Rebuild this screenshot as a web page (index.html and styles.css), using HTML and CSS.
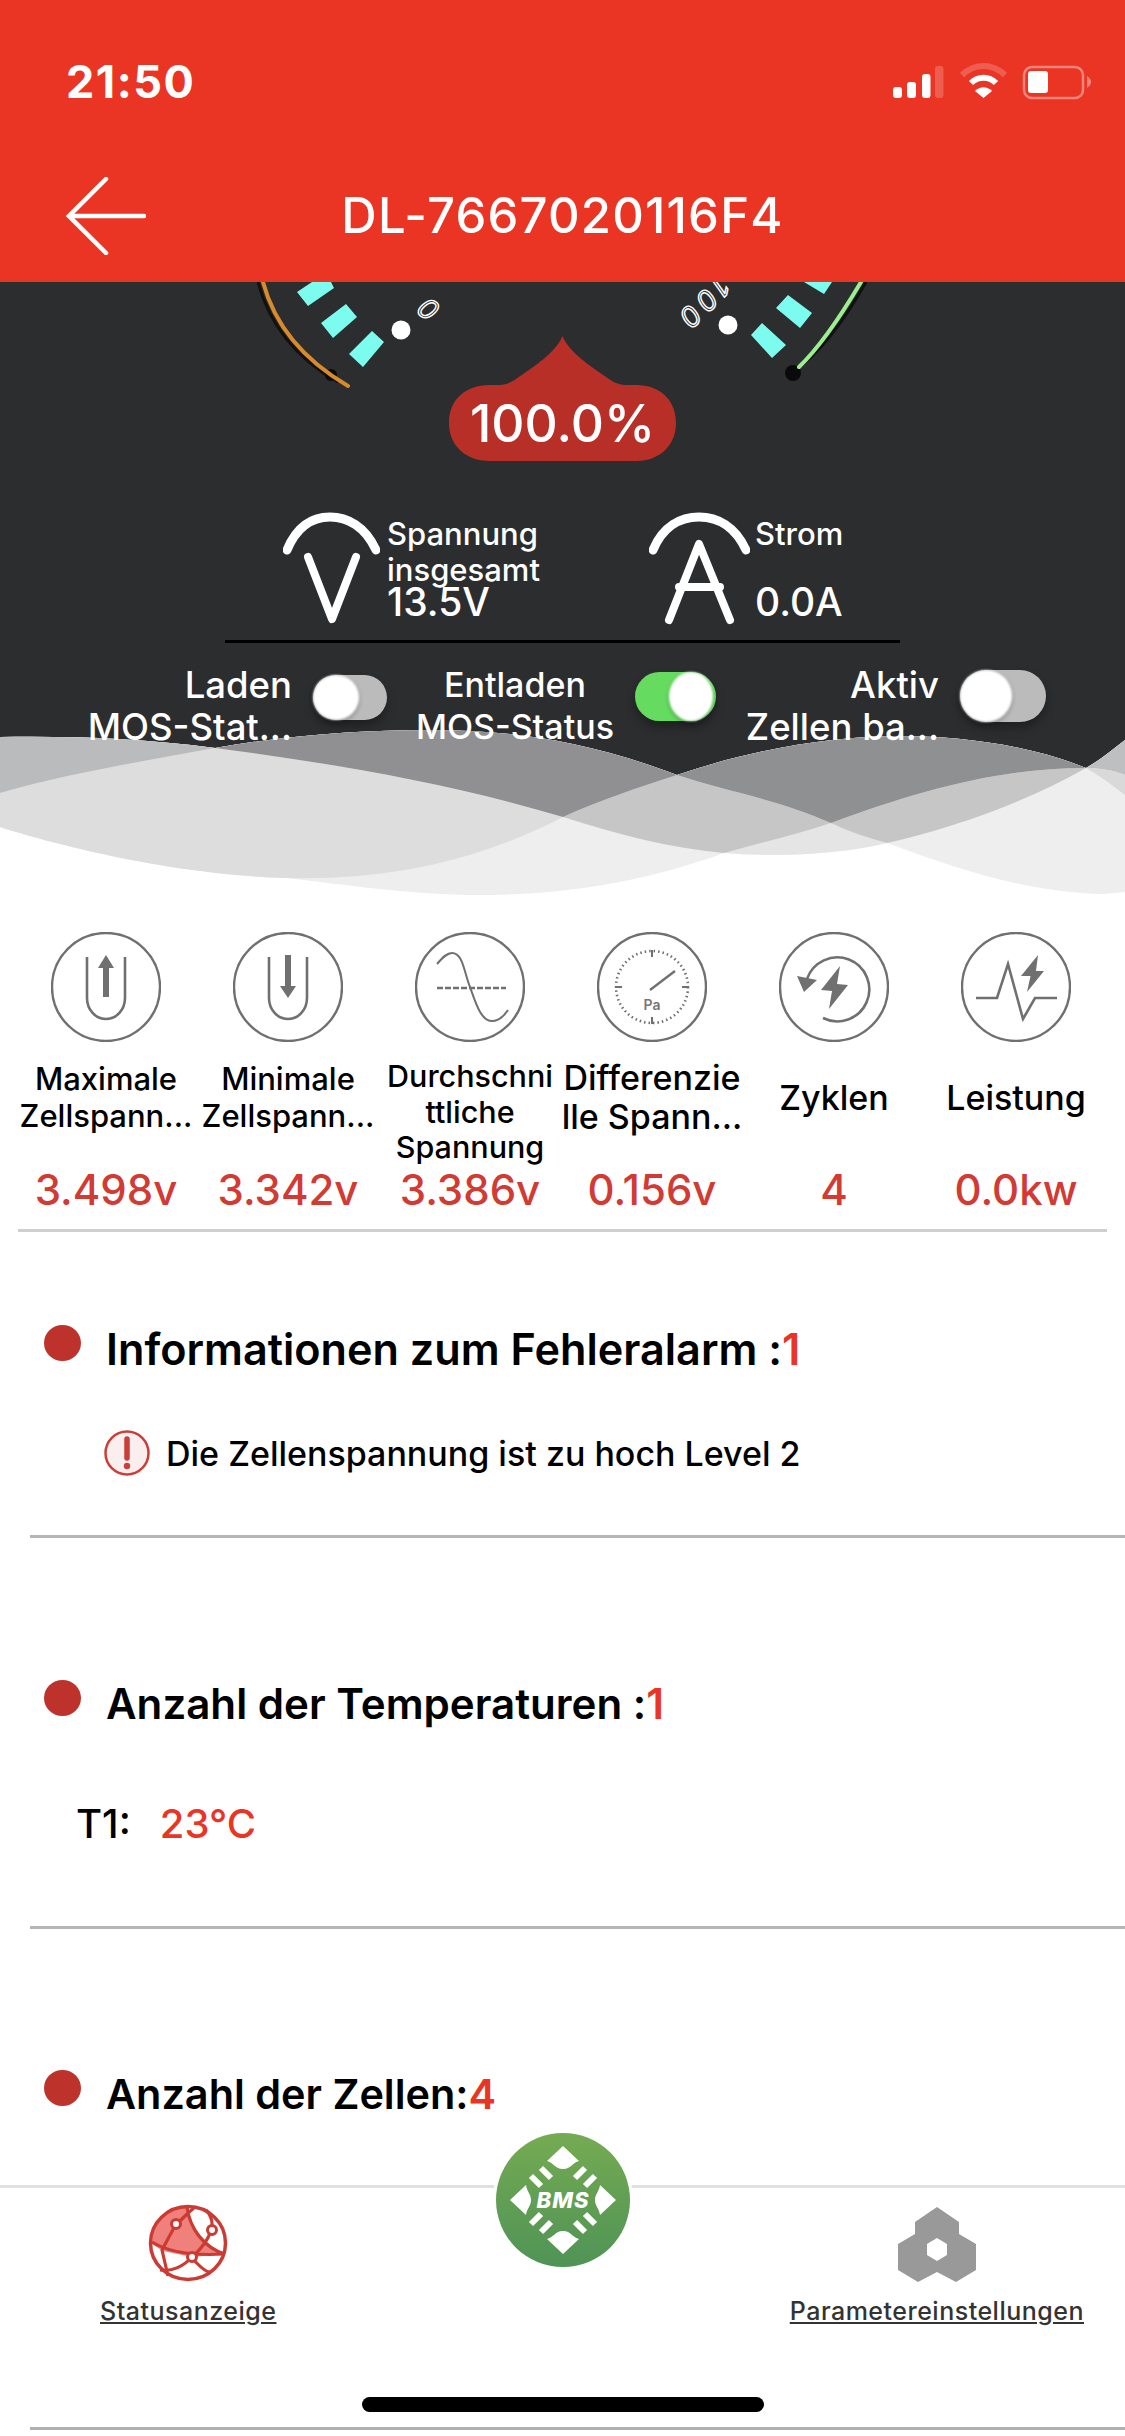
FILE: index.html
```html
<!DOCTYPE html>
<html lang="de">
<head>
<meta charset="utf-8">
<title>DL-7667020116F4</title>
<link rel="stylesheet" href="styles.css">
</head>
<body>
<div class="screen">
  <header class="app-header">
    <div class="statusbar">
      <span class="time">21:50</span>
      <svg class="status-icons" viewBox="880 60 220 45" width="220" height="45">
        <rect x="893" y="87" width="9" height="11" rx="3" fill="#fff"/>
        <rect x="907" y="82" width="9" height="16" rx="3" fill="#fff"/>
        <rect x="922" y="74" width="8.500" height="24" rx="3" fill="#fff"/>
        <rect x="935" y="66" width="8.500" height="32" rx="3" fill="#fff" opacity=".2"/>
        <path d="M962 75 C975 63 992 63 1005 75" fill="none" stroke="#fff" stroke-opacity=".2" stroke-width="6"/>
        <path d="M971 83 C978 76 989 76 996 83" fill="none" stroke="#fff" stroke-width="6"/>
        <path d="M975 91 C980 86 987 86 992 91 L983.500 98Z" fill="#fff"/>
        <rect x="1024" y="67" width="59" height="31" rx="8" fill="none" stroke="#fff" stroke-opacity=".4" stroke-width="2.500"/>
        <rect x="1028" y="71" width="20" height="22" rx="3" fill="#fff"/>
        <path d="M1087 76 C1090 78 1091 80 1091 82 C1091 84 1090 86 1087 88Z" fill="#fff" opacity=".4"/>
      </svg>
    </div>
    <div class="titlebar">
      <svg class="back" viewBox="0 0 80 78" width="80" height="78">
        <path d="M40 2 L3 39 L40 76 M3 39 H78" fill="none" stroke="#fff" stroke-width="4.500" stroke-linecap="round"/>
      </svg>
      <h1 class="device-name">DL-7667020116F4</h1>
      <span></span>
    </div>
  </header>

  <section class="panel">
    <svg class="waves" viewBox="0 720 1125 190" width="1125" height="190">
      <path fill="#fff" d="M0 737 C70 736 140 738 215 748 C290 735 360 730 431 730 C500 730 580 738 677 775 C750 750 830 736 900 736 C960 736 1030 745 1086 768 C1100 760 1112 750 1125 740 L1125 910 L0 910Z"/>
      <path fill="#eee" d="M0 737 C70 736 140 738 215 748 C290 735 360 730 431 730 C500 730 580 738 677 775 C750 750 830 736 900 736 C960 736 1030 745 1086 768 C1100 760 1112 750 1125 740 L1125 892 L1104 894 C1030 893 960 870 887 843 C835 855 780 857 724 853 C650 880 570 895 480 895 C410 895 340 884 287 878 C170 875 50 843 0 827Z"/>
      <path fill="#ddd" d="M0 793 C70 773 140 762 215 748 C330 763 450 783 563 817 C470 865 380 880 287 878 C170 875 50 843 0 827Z"/>
      <path fill="#e5e5e5" d="M724 853 C762 842 796 835 831 823 C850 832 868 838 887 843 C835 855 780 857 724 853Z"/>
      <path fill="#c6c6c6" d="M563 817 C600 800 640 787 677 775 C725 791 780 800 831 823 C796 835 762 842 724 853 C670 848 620 835 563 817Z"/>
      <path fill="#c6c6c6" d="M831 823 C920 790 1000 768 1086 768 C1030 800 960 826 887 843 C868 838 850 832 831 823Z"/>
      <path fill="#909092" d="M215 748 C290 735 360 730 431 730 C500 730 580 738 677 775 C640 787 600 800 563 817 C450 783 330 763 215 748Z"/>
      <path fill="#8f9092" d="M677 775 C750 750 830 736 900 736 C960 736 1030 745 1086 768 C1000 768 920 790 831 823 C780 800 725 791 677 775Z"/>
      <path fill="#babbbc" d="M0 737 C70 736 140 738 215 748 C140 762 70 773 0 793Z"/>
      <path fill="#bebfc0" d="M1086 768 C1100 768 1112 770 1125 775 L1125 740 C1112 750 1100 760 1086 768Z"/>
      <path fill="#d9d9d9" d="M1086 768 C1100 768 1112 770 1125 775 L1125 795 C1112 785 1100 776 1086 768Z"/>
    </svg>

    <svg class="gauge" viewBox="0 282 1125 190" width="1125" height="190">
      <path d="M258 282 Q275 346 338 382" fill="none" stroke="#111" stroke-width="3"/>
      <circle cx="331" cy="375" r="6" fill="#0a0a0a"/>
      <path d="M263 282 Q280 346 348 386" fill="none" stroke="#d88a2c" stroke-width="4" stroke-linecap="round"/>
      <path d="M297 292 L312 282 L331 282 L334 288 L308 306Z M321 323 L346 304 L357 317 L333 338Z M349 354 L372 331 L384 342 L363 367Z" fill="#7bfcef"/>
      <circle cx="401" cy="330" r="9.500" fill="#fff"/>
      <text class="scale" transform="translate(428 309) rotate(40)">0</text>
      <path d="M866 282 Q830 346 795 370" fill="none" stroke="#111" stroke-width="3"/>
      <circle cx="793" cy="373" r="8" fill="#0a0a0a"/>
      <path d="M861 282 Q826 341 799 367" fill="none" stroke="#9bef8f" stroke-width="4" stroke-linecap="round"/>
      <path d="M804 282 L832 282 L824 294Z M776 308 L788 295 L812 313 L800 328Z M751 335 L762 323 L786 345 L772 358Z" fill="#7bfcef"/>
      <circle cx="728" cy="325" r="9.500" fill="#fff"/>
      <text class="scale scale-wide" transform="translate(703 304) rotate(135)">100</text>
      <path fill="#b82f28" d="M562.500 336 C556 352 535 366 516 379 C510 383 505 385 497 385 L490 385 C465 385 449 400 449 423 C449 445 465 461 490 461 L636 461 C660 461 676 445 676 423 C676 400 660 385 636 385 L628 385 C620 385 615 383 609 379 C590 366 569 352 562.500 336Z"/>
      <text class="percent" x="562.500" y="442">100.0%</text>
    </svg>

    <div class="readings">
      <div class="reading reading-volt">
        <svg viewBox="0 0 97 113" width="97" height="113">
          <path d="M4 38 C14 14 30 5 47 5 C64 5 82 14 93 38" fill="none" stroke="#fff" stroke-width="9" stroke-linecap="round"/>
          <path d="M25 45 L49 107 L73 45" fill="none" stroke="#fff" stroke-width="8" stroke-linecap="round" stroke-linejoin="round"/>
        </svg>
        <div class="reading-text">
          <p class="reading-label">Spannung</p>
          <p class="reading-label">insgesamt</p>
          <p class="reading-value">13.5V</p>
        </div>
      </div>
      <div class="reading reading-amp">
        <svg viewBox="0 0 101 113" width="101" height="113">
          <path d="M4 38 C14 14 32 5 50 5 C68 5 86 14 97 38" fill="none" stroke="#fff" stroke-width="9" stroke-linecap="round"/>
          <path d="M20 108 L50 32 L81 108 M30 75 H71" fill="none" stroke="#fff" stroke-width="8" stroke-linecap="round" stroke-linejoin="round"/>
        </svg>
        <div class="reading-text">
          <p class="reading-label">Strom</p>
          <p class="reading-value">0.0A</p>
        </div>
      </div>
    </div>
    <div class="panel-rule"></div>

    <div class="switches">
      <div class="switch-item">
        <div class="switch-label right">Laden<br>MOS-Stat...</div>
        <div class="toggle toggle-a"><span class="thumb"></span></div>
      </div>
      <div class="switch-item">
        <div class="switch-label switch-label-mid center">Entladen<br>MOS-Status</div>
        <div class="toggle toggle-b"><span class="thumb"></span></div>
      </div>
      <div class="switch-item">
        <div class="switch-label right">Aktiv<br>Zellen ba...</div>
        <div class="toggle toggle-c"><span class="thumb"></span></div>
      </div>
    </div>
  </section>

  <section class="stats">
    <div class="stat">
      <svg class="stat-icon" viewBox="0 0 110 110" width="110" height="110">
        <circle cx="55" cy="55" r="54" class="ring"/>
        <path d="M36 25 V66 a19 21 0 0 0 38 0 V25" class="line"/>
        <path d="M55 65 V34" class="thick"/>
        <path d="M47 36 L55 23 L63 36Z" class="solid"/>
      </svg>
      <div class="stat-label">Maximale<br>Zellspann...</div>
      <div class="stat-value">3.498v</div>
    </div>
    <div class="stat">
      <svg class="stat-icon" viewBox="0 0 110 110" width="110" height="110">
        <circle cx="55" cy="55" r="54" class="ring"/>
        <path d="M36 25 V66 a19 21 0 0 0 38 0 V25" class="line"/>
        <path d="M55 23 V54" class="thick"/>
        <path d="M47 54 L55 66 L63 54Z" class="solid"/>
      </svg>
      <div class="stat-label">Minimale<br>Zellspann...</div>
      <div class="stat-value">3.342v</div>
    </div>
    <div class="stat">
      <svg class="stat-icon" viewBox="0 0 110 110" width="110" height="110">
        <circle cx="55" cy="55" r="54" class="ring"/>
        <path d="M22 32 C28 25 32 21 37 21 C48 21 49 40 55 55 C61 72 66 89 77 89 C84 89 89 84 93 78" class="thin"/>
        <path d="M22 56 H91" class="dash"/>
      </svg>
      <div class="stat-label stat-label-long">Durchschni<br>ttliche<br>Spannung</div>
      <div class="stat-value">3.386v</div>
    </div>
    <div class="stat">
      <svg class="stat-icon" viewBox="0 0 110 110" width="110" height="110">
        <circle cx="55" cy="55" r="54" class="ring"/>
        <circle cx="55" cy="55" r="36" class="dial"/>
        <path d="M55 18 V25 M55 85 V92 M18 55 H25 M85 55 H92" class="thin"/>
        <path d="M53 58 L78 39" class="needle"/>
        <text x="55" y="78" class="pa">Pa</text>
      </svg>
      <div class="stat-label stat-label-wide">Differenzie<br>lle Spann...</div>
      <div class="stat-value">0.156v</div>
    </div>
    <div class="stat">
      <svg class="stat-icon" viewBox="0 0 110 110" width="110" height="110">
        <circle cx="55" cy="55" r="54" class="ring"/>
        <path d="M44 86 A32 32 0 1 0 28 47" class="line"/>
        <path d="M18 44 L38 48 L25 60Z" class="solid"/>
        <path d="M61 34 L42 58 L53 59 L50 77 L69 53 L58 52Z" class="solid"/>
      </svg>
      <div class="stat-label stat-label-big">Zyklen</div>
      <div class="stat-value">4</div>
    </div>
    <div class="stat">
      <svg class="stat-icon" viewBox="0 0 110 110" width="110" height="110">
        <circle cx="55" cy="55" r="54" class="ring"/>
        <path d="M15 66 H36 L47 32 L62 87 L74 66 H96" class="line"/>
        <path d="M77 23 L60 44 L69.500 44 L66 60 L83 39 L75 39Z" class="solid"/>
      </svg>
      <div class="stat-label stat-label-big">Leistung</div>
      <div class="stat-value">0.0kw</div>
    </div>
  </section>
  <div class="stats-rule"></div>

  <section class="block block-alarm">
    <h2 class="block-title title-long"><span class="dot"></span>Informationen zum Fehleralarm :<em>1</em></h2>
    <div class="alarm">
      <svg viewBox="0 0 46 46" width="46" height="46">
        <circle cx="23" cy="23" r="21.500" fill="#fbeeee" stroke="#c9403a" stroke-width="2.500"/>
        <path d="M23 9 V28" fill="none" stroke="#c9403a" stroke-width="5.500" stroke-linecap="round"/>
        <circle cx="23" cy="36" r="3.200" fill="#c9403a"/>
      </svg>
      <span>Die Zellenspannung ist zu hoch Level 2</span>
    </div>
  </section>
  <div class="rule"></div>

  <section class="block block-temp">
    <h2 class="block-title title-mid"><span class="dot"></span>Anzahl der Temperaturen :<em>1</em></h2>
    <div class="temp"><b>T1:</b><span>23°C</span></div>
  </section>
  <div class="rule"></div>

  <section class="block block-cells">
    <h2 class="block-title title-short"><span class="dot"></span>Anzahl der Zellen:<em>4</em></h2>
  </section>

  <nav class="tabbar">
    <a class="tab tab-status">
      <svg viewBox="0 0 80 78" width="80" height="78">
        <path d="M38 2 A37 37 0 0 0 4 40 L15 47 L44 53 L77 50 C58 40 44 26 38 2Z" fill="#f0807c"/>
        <ellipse cx="40" cy="39" rx="37.500" ry="36.500" fill="none" stroke="#cc3b33" stroke-width="3.500"/>
        <path d="M39 3 C42 25 56 44 77 50 M4 38 C20 48 44 52 77 50 M28 20 L14 46 L20 72 M28 20 C34 16 38 10 46 4 M63 26 C66 18 62 10 58 6 M63 26 C60 38 52 46 44 53 M44 53 C36 62 24 68 12 66 M44 53 C48 60 58 68 62 68" fill="none" stroke="#cc3b33" stroke-width="3.200"/>
        <circle cx="28" cy="20" r="4.500" fill="#fff" stroke="#cc3b33" stroke-width="3"/>
        <circle cx="64" cy="26" r="4.500" fill="#fff" stroke="#cc3b33" stroke-width="3"/>
        <circle cx="44" cy="53" r="4.500" fill="#fff" stroke="#cc3b33" stroke-width="3"/>
      </svg>
      <span>Statusanzeige</span>
    </a>
    <a class="tab tab-params">
      <svg viewBox="898 2204 78 78" width="78" height="78">
        <path fill="#999" fill-rule="evenodd" d="M937 2207 L959 2222 L959 2234 L976 2244 L976 2270 L956 2282 L937 2272 L918 2282 L898 2270 L898 2244 L915 2234 L915 2222Z M937 2238 L927 2244 L927 2255 L937 2261 L947 2255 L947 2244Z"/>
      </svg>
      <span>Parametereinstellungen</span>
    </a>
    <div class="bms">
      <svg viewBox="-70 -70 140 140" width="140" height="140">
        <defs>
          <linearGradient id="bmsFill" x1="0" y1="0" x2="0" y2="1">
            <stop offset="0" stop-color="#75ab52"/>
            <stop offset="1" stop-color="#4f9356"/>
          </linearGradient>
        </defs>
        <circle r="70" fill="#fff"/>
        <circle r="67" fill="url(#bmsFill)"/>
        <path fill="#fff" d="M0 -54 L16 -39 C10 -38 8 -31 0 -31 C-8 -31 -10 -38 -16 -39Z M0 54 L16 39 C10 38 8 31 0 31 C-8 31 -10 38 -16 39Z M-53 0 L-37 -15 C-36 -8 -32 -6 -32 0 C-32 6 -36 8 -37 15Z M53 0 L37 -15 C36 -8 32 -6 32 0 C32 6 36 8 37 15Z"/>
        <g stroke="#fff" stroke-width="6" fill="none">
          <path d="M-22 -32 L-12 -22 M-32 -24 L-22 -14 M22 -32 L12 -22 M32 -24 L22 -14 M-22 32 L-12 22 M-32 24 L-22 14 M22 32 L12 22 M32 24 L22 14"/>
        </g>
        <text class="bms-text" x="0" y="8">BMS</text>
      </svg>
    </div>
    <div class="home-indicator"></div>
  </nav>
  <div class="rule rule-last"></div>
</div>
</body>
</html>
```

FILE: styles.css
```css
* {
  box-sizing: border-box;
}

html,
body {
  margin: 0;
  padding: 0;
  background: #fff;
}

body {
  font-family: Inter, "Liberation Sans", sans-serif;
  color: #000;
}

p,
h1,
h2 {
  margin: 0;
}

.screen {
  width: 1125px;
  height: 2436px;
  overflow: hidden;
}

/* header */
.app-header {
  height: 282px;
  background: #ea3524;
  color: #fff;
}

.statusbar {
  height: 164px;
  padding: 60px 25px 0 66px;
  display: flex;
  justify-content: space-between;
  align-items: flex-start;
}

.time {
  font-size: 45px;
  line-height: 44px;
  font-weight: 700;
  letter-spacing: 1.5px;
}

.status-icons {
  display: block;
}

.titlebar {
  height: 104px;
  padding-left: 66px;
  display: grid;
  grid-template-columns: 1fr auto 1fr;
  align-items: center;
  margin-right: 66px;
}

.back {
  display: block;
}

.device-name {
  font-size: 49px;
  line-height: 60px;
  font-weight: 500;
  letter-spacing: 1.2px;
}

/* dark panel */
.panel {
  position: relative;
  height: 628px;
  background: #2c2d2f;
  color: #fff;
}

.waves {
  position: absolute;
  left: 0;
  bottom: 0;
  display: block;
}

.gauge {
  position: relative;
  display: block;
}

.scale {
  font-family: Inter, sans-serif;
  font-size: 28px;
  font-style: italic;
  fill: none;
  stroke: #fff;
  stroke-width: 1.4;
  text-anchor: middle;
  dominant-baseline: central;
}

.scale-wide {
  letter-spacing: 5px;
}

.percent {
  font-family: Inter, sans-serif;
  font-size: 51.500px;
  font-weight: 500;
  fill: #fff;
  text-anchor: middle;
}

.readings {
  position: relative;
  margin-top: 40px;
  height: 113px;
  padding-left: 283px;
  display: flex;
}

.reading {
  display: flex;
}

.reading svg {
  display: block;
}

.reading-volt {
  width: 366px;
  gap: 7px;
}

.reading-amp {
  gap: 5px;
}

.reading-text {
  margin-top: 4px;
  height: 101px;
  display: flex;
  flex-direction: column;
  justify-content: space-between;
}

.reading-label {
  font-size: 31px;
  line-height: 35px;
  font-weight: 500;
}

.reading-value {
  font-size: 39px;
  line-height: 30px;
  font-weight: 500;
}

.panel-rule {
  position: relative;
  width: 675px;
  height: 3px;
  margin: 15px auto 0;
  background: #000;
}

.switches {
  position: relative;
  margin-top: 21px;
  padding-left: 87px;
  display: grid;
  grid-template-columns: 300px 298px 299px;
  column-gap: 31px;
}

.switch-item {
  display: flex;
  justify-content: flex-end;
  align-items: flex-start;
  gap: 21px;
}

.switch-label {
  font-size: 36.500px;
  line-height: 42px;
  font-weight: 500;
  white-space: nowrap;
}

.switch-label-mid {
  font-size: 34px;
}

.right {
  text-align: right;
}

.center {
  text-align: center;
}

.toggle {
  display: flex;
  flex-shrink: 0;
  background: #bbb;
  box-shadow: 0 6px 10px rgba(0, 0, 0, 0.3);
}

.thumb {
  display: block;
  background: #fff;
  border-radius: 50%;
  box-shadow: 0 2px 4px rgba(0, 0, 0, 0.3);
  filter: blur(1px);
}

.toggle-a {
  width: 74px;
  height: 45px;
  margin-top: 11px;
  border-radius: 23px;
}

.toggle-a .thumb {
  width: 46px;
}

.toggle-b {
  width: 81px;
  height: 49px;
  margin-top: 8px;
  border-radius: 25px;
  background: #65dc60;
  justify-content: flex-end;
  padding-right: 3px;
}

.toggle-b .thumb {
  width: 44px;
}

.toggle-c {
  width: 86px;
  height: 52px;
  margin-top: 6px;
  border-radius: 26px;
}

.toggle-c .thumb {
  width: 52px;
}

/* stat row */
.stats {
  margin-left: 15px;
  padding-top: 22px;
  display: grid;
  grid-template-columns: repeat(6, 182px);
}

.stat {
  display: flex;
  flex-direction: column;
  align-items: center;
  text-align: center;
}

.stat-icon {
  display: block;
}

.ring,
.line,
.thin,
.dash,
.dial,
.needle,
.thick {
  fill: none;
  stroke: #707070;
}

.ring {
  stroke-width: 2.4;
}

.line {
  stroke-width: 2.6;
}

.thin {
  stroke-width: 2;
}

.dash {
  stroke-width: 2.4;
  stroke-dasharray: 6 2;
}

.dial {
  stroke-width: 2.6;
  stroke-dasharray: 1.5 3;
}

.needle {
  stroke-width: 2.4;
}

.thick {
  stroke-width: 6;
}

.solid {
  fill: #707070;
}

.pa {
  font-family: Inter, sans-serif;
  font-size: 14px;
  font-weight: 600;
  fill: #777;
  text-anchor: middle;
}

.stat-label {
  margin-top: 16px;
  height: 78px;
  display: flex;
  align-items: center;
  font-size: 31px;
  line-height: 37px;
  font-weight: 500;
  white-space: nowrap;
}

.stat-label-long {
  align-items: flex-start;
  font-size: 30.500px;
  line-height: 35.5px;
}

.stat-label-wide {
  font-size: 34px;
  line-height: 39px;
}

.stat-label-big {
  font-size: 34px;
}

.stat-value {
  margin-top: 31px;
  font-size: 42px;
  line-height: 46px;
  font-weight: 500;
  color: #d23a34;
}

.stats-rule {
  height: 3px;
  margin: 16px 18px 0;
  background: #cfcfd3;
}

/* blocks */
.block-title {
  display: flex;
  align-items: center;
  padding-left: 44px;
  height: 60px;
  line-height: 60px;
  font-weight: 600;
}

.title-long {
  font-size: 43.2px;
}

.title-mid {
  font-size: 42.1px;
}

.title-short {
  font-size: 41.4px;
}

.block-title em {
  font-style: normal;
  color: #ea3524;
}

.dot {
  width: 37px;
  height: 36px;
  margin: -12px 25px 0 0;
  border-radius: 50%;
  background: #bd322b;
}

.block-alarm {
  padding-top: 87px;
}

.alarm {
  margin-top: 51px;
  padding-left: 104px;
  height: 46px;
  display: flex;
  align-items: center;
  gap: 16px;
  font-size: 34px;
  font-weight: 500;
}

.alarm svg {
  display: block;
}

.rule {
  height: 3px;
  margin-left: 30px;
  background: #b5b5b5;
}

.block-alarm + .rule {
  margin-top: 59px;
}

.block-temp {
  padding-top: 136px;
}

.temp {
  margin-top: 65px;
  padding-left: 76px;
  height: 48px;
  display: flex;
  align-items: center;
  gap: 29px;
  font-size: 40px;
  font-weight: 500;
}

.temp b {
  font-weight: 500;
}

.temp span {
  color: #ea3524;
}

.block-temp + .rule {
  margin-top: 79px;
}

.block-cells {
  padding-top: 135px;
}

/* tab bar */
.tabbar {
  position: relative;
  height: 242px;
  margin-top: 61px;
  padding: 16px 41px 0 100px;
  border-top: 3px solid #e0e0e0;
  background: #fff;
  display: flex;
  justify-content: space-between;
  align-items: flex-start;
}

.tab {
  display: flex;
  flex-direction: column;
  align-items: center;
  gap: 11px;
  color: #333;
  font-size: 25px;
  line-height: 36px;
  font-weight: 500;
  text-decoration: underline;
  letter-spacing: 0.5px;
}

.tab svg {
  display: block;
}

.bms {
  position: absolute;
  left: 492.500px;
  top: -58px;
}

.bms svg {
  display: block;
}

.bms-text {
  font-family: Inter, sans-serif;
  font-size: 22px;
  font-weight: 800;
  font-style: italic;
  fill: #fff;
  text-anchor: middle;
  letter-spacing: 1px;
}

.home-indicator {
  position: absolute;
  left: 362px;
  top: 209px;
  width: 402px;
  height: 15px;
  border-radius: 8px;
  background: #000;
}

.rule-last {
  background: #b0b0b0;
}
```
